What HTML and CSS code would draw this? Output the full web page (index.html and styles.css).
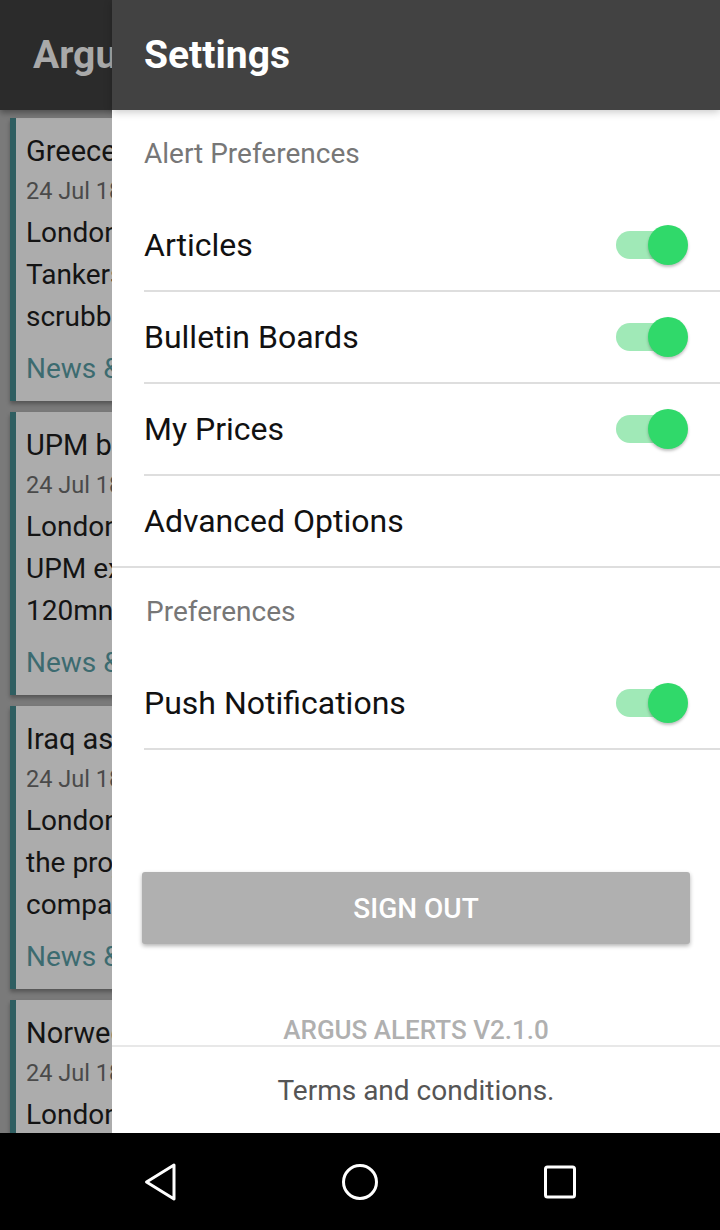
FILE: index.html
```html
<!DOCTYPE html>
<html lang="en">
<head>
    <meta charset="UTF-8">
    <meta name="viewport" content="width=device-width, initial-scale=1.0">
    <title>Settings</title>
    <link rel="stylesheet" href="styles.css">
</head>
<body>
    <div class="screen">
        <div class="app">
            <!-- feed behind the drawer -->
            <div class="feed">
                <header class="feed-bar"><span class="feed-title">Argus Alerts</span></header>
                <div class="feed-list">
                    <article class="card">
                        <div class="card-title">Greece lifts tanker demand</div>
                        <div class="card-date">24 Jul 18 10:32</div>
                        <div class="card-line">London, 24 July (Argus) &mdash; Greek shipowners</div>
                        <div class="card-line">Tankers fitted with</div>
                        <div class="card-line">scrubbers ahead of 2020</div>
                        <div class="card-tag">News &amp; Analysis</div>
                    </article>
                    <article class="card">
                        <div class="card-title">UPM boosts pulp output</div>
                        <div class="card-date">24 Jul 18 09:15</div>
                        <div class="card-line">London, 24 July (Argus) &mdash;</div>
                        <div class="card-line">UPM expects to invest</div>
                        <div class="card-line">120mn in the project</div>
                        <div class="card-tag">News &amp; Analysis</div>
                    </article>
                    <article class="card">
                        <div class="card-title">Iraq asks for bids</div>
                        <div class="card-date">24 Jul 18 08:40</div>
                        <div class="card-line">London, 24 July (Argus) &mdash;</div>
                        <div class="card-line">the project would let the</div>
                        <div class="card-line">company raise output</div>
                        <div class="card-tag">News &amp; Analysis</div>
                    </article>
                    <article class="card">
                        <div class="card-title">Norwegian gas flows</div>
                        <div class="card-date">24 Jul 18 08:05</div>
                        <div class="card-line">London, 24 July (Argus) &mdash;</div>
                    </article>
                </div>
            </div>

            <aside class="drawer">
                <header class="drawer-bar">Settings</header>
                <div class="drawer-body">
                    <div class="section-title">Alert Preferences</div>
                    <div class="pref-row">
                        <span>Articles</span>
                        <span class="switch"><span class="switch-track"></span><span class="switch-thumb"></span></span>
                    </div>
                    <div class="pref-row">
                        <span>Bulletin Boards</span>
                        <span class="switch"><span class="switch-track"></span><span class="switch-thumb"></span></span>
                    </div>
                    <div class="pref-row">
                        <span>My Prices</span>
                        <span class="switch"><span class="switch-track"></span><span class="switch-thumb"></span></span>
                    </div>
                    <div class="pref-row full">
                        <span>Advanced Options</span>
                    </div>
                    <div class="section-title second">Preferences</div>
                    <div class="pref-row">
                        <span>Push Notifications</span>
                        <span class="switch"><span class="switch-track"></span><span class="switch-thumb"></span></span>
                    </div>
                    <button type="button" class="sign-out">SIGN OUT</button>
                    <div class="version">ARGUS ALERTS V2.1.0</div>
                </div>
                <footer class="drawer-foot">Terms and conditions.</footer>
            </aside>
        </div>

        <nav class="navbar">
            <div class="nav-btn">
                <svg width="40" height="40" viewBox="0 0 40 40"><path d="M34 3 L6.5 20 L34 37 Z" fill="none" stroke="#fff" stroke-width="3" stroke-linejoin="round"/></svg>
            </div>
            <div class="nav-btn">
                <svg width="40" height="40" viewBox="0 0 40 40"><circle cx="20" cy="20" r="16.5" fill="none" stroke="#fff" stroke-width="3"/></svg>
            </div>
            <div class="nav-btn">
                <svg width="40" height="40" viewBox="0 0 40 40"><rect x="5.5" y="5" width="29" height="30" rx="2" fill="none" stroke="#fff" stroke-width="3"/></svg>
            </div>
        </nav>
    </div>
</body>
</html>
```

FILE: styles.css
```css
body {
    margin: 0;
    font-family: Roboto, "Liberation Sans", sans-serif;
    background-color: #000;
}

.screen {
    width: 720px;
    height: 1230px;
    display: flex;
    flex-direction: column;
    overflow: hidden;
}

.app {
    position: relative;
    height: 1133px;
    overflow: hidden;
    background-color: #7a7a7a;
}

/* feed (dimmed under the drawer) */
.feed-bar {
    height: 110px;
    background-color: #2b2b2b;
    box-shadow: 0 3px 6px rgba(0, 0, 0, 0.35);
    display: flex;
    align-items: center;
    padding-left: 33px;
    position: relative;
}

.feed-title {
    color: #a9a9a9;
    font-size: 39px;
    font-weight: bold;
    white-space: nowrap;
}

.feed-list {
    padding: 8px 10px 0 10px;
    display: flex;
    flex-direction: column;
    gap: 11px;
}

.card {
    height: 283px;
    box-sizing: border-box;
    flex-shrink: 0;
    background-color: #acacac;
    border-left: 6px solid #2f5e61;
    box-shadow: 0 3px 4px rgba(0, 0, 0, 0.3);
    padding: 14px 0 11px 10px;
    white-space: nowrap;
    overflow: hidden;
}

.card-title {
    font-size: 29px;
    line-height: 38px;
    color: #141414;
}

.card-date {
    font-size: 23.5px;
    line-height: 42px;
    color: #4a4a4a;
}

.card-line {
    font-size: 28px;
    line-height: 42px;
    color: #141414;
}

.card-tag {
    margin-top: 10px;
    font-size: 28px;
    line-height: 42px;
    color: #3c6b70;
}

/* drawer */
.drawer {
    position: absolute;
    top: 0;
    left: 112px;
    right: 0;
    bottom: 0;
    background-color: #fff;
    display: flex;
    flex-direction: column;
}

.drawer-bar {
    height: 110px;
    flex-shrink: 0;
    background-color: #424242;
    color: #fff;
    font-size: 39px;
    font-weight: bold;
    display: flex;
    align-items: center;
    padding-left: 32px;
    box-shadow: 0 2px 8px rgba(0, 0, 0, 0.22);
    position: relative;
    z-index: 1;
}

.drawer-body {
    flex: 1;
    overflow: hidden;
    display: flex;
    flex-direction: column;
}

.section-title {
    height: 90px;
    line-height: 88px;
    padding-left: 32px;
    font-size: 28px;
    color: #777;
    flex-shrink: 0;
}

.section-title.second {
    padding-left: 34px;
}

.pref-row {
    height: 90px;
    flex-shrink: 0;
    margin-left: 32px;
    padding-right: 32px;
    border-bottom: 2px solid #dedede;
    display: flex;
    align-items: center;
    justify-content: space-between;
    font-size: 32px;
    color: #111;
}

.pref-row.full {
    margin-left: 0;
    padding-left: 32px;
}

.switch {
    position: relative;
    width: 72px;
    height: 40px;
}

.switch-track {
    position: absolute;
    left: 0;
    top: 6px;
    width: 68px;
    height: 28px;
    border-radius: 14px;
    background-color: #a0e9b7;
}

.switch-thumb {
    position: absolute;
    right: 0;
    top: 0;
    width: 40px;
    height: 40px;
    border-radius: 50%;
    background-color: #30d96a;
    box-shadow: 0 2px 3px rgba(0, 0, 0, 0.25);
}

.sign-out {
    margin: 122px 30px 0 30px;
    height: 72px;
    flex-shrink: 0;
    border: none;
    border-radius: 3px;
    background-color: #b0b0b0;
    color: #fff;
    font-family: Roboto, "Liberation Sans", sans-serif;
    font-size: 28px;
    font-weight: 500;
    box-shadow: 0 2px 4px rgba(0, 0, 0, 0.3);
}

.version {
    margin-top: 68px;
    text-align: center;
    font-size: 26px;
    line-height: 36px;
    font-weight: 500;
    color: #b0b0b0;
    flex-shrink: 0;
}

.drawer-foot {
    height: 86px;
    flex-shrink: 0;
    border-top: 2px solid #e8e8e8;
    display: flex;
    align-items: center;
    justify-content: center;
    font-size: 28px;
    color: #555;
}

/* system nav */
.navbar {
    height: 97px;
    background-color: #000;
    display: flex;
    align-items: center;
    padding: 0 60px;
}

.nav-btn {
    flex: 1;
    display: flex;
    justify-content: center;
}
```
